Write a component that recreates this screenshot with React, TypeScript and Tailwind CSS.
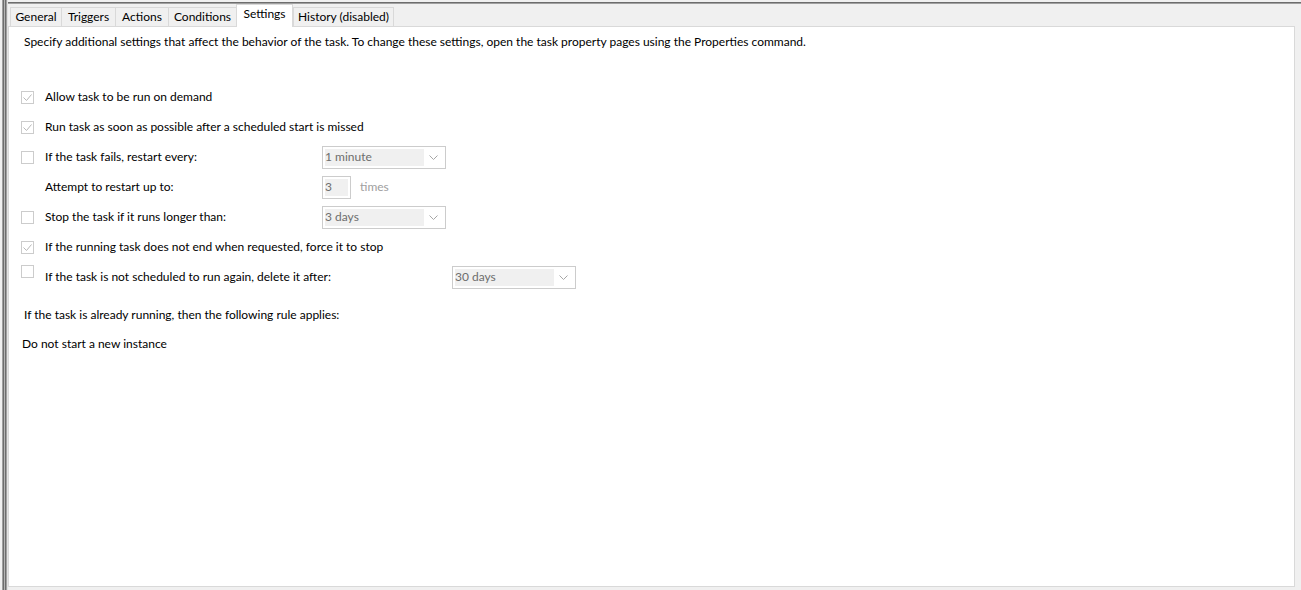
const tabs = [
  { label: 'General', w: 'w-[51px]' },
  { label: 'Triggers', w: 'w-[54px]' },
  { label: 'Actions', w: 'w-[53px]' },
  { label: 'Conditions', w: 'w-[68px]' },
  { label: 'Settings', w: 'w-[57px]', active: true },
  { label: 'History (disabled)', w: 'w-[101px]', last: true },
];

function Check({ checked }: { checked?: boolean }) {
  return (
    <div className="w-[13px] h-[13px] border border-[#cccccc] bg-white flex items-center justify-center shrink-0">
      {checked && (
        <svg width="11" height="11" viewBox="0 0 11 11">
          <polyline points="1.5,5.5 4.5,8.5 9.5,2.5" fill="none" stroke="#b8b8b8" strokeWidth="1" />
        </svg>
      )}
    </div>
  );
}

function Dropdown({ value }: { value: string }) {
  return (
    <div className="w-[124px] h-[23px] border border-[#cccccc] bg-white flex items-center p-[2px]">
      <div className="flex-1 h-full bg-[#f0f0f0] flex items-center text-[#6d6d6d]">{value}</div>
      <div className="w-[19px] h-full flex items-center justify-center">
        <svg width="9" height="5" viewBox="0 0 9 5">
          <polyline points="0.5,0.5 4.5,4.5 8.5,0.5" fill="none" stroke="#a6a6a6" strokeWidth="1" />
        </svg>
      </div>
    </div>
  );
}

export default function App() {
  return (
    <div className="flex h-[590px] w-full bg-[#f0f0f0] font-['Lato','Noto_Sans',sans-serif] text-[12px] leading-[16px] text-black">
      {/* splitter stripes */}
      <div className="flex h-full shrink-0">
        <div className="w-[2px] bg-[#f0f0f0]" />
        <div className="w-px bg-[#a0a0a0]" />
        <div className="w-px bg-[#6d6d6d]" />
        <div className="w-px bg-[#b4b4b4]" />
        <div className="w-px bg-[#6d6d6d]" />
        <div className="w-px bg-[#a0a0a0]" />
        <div className="w-px bg-[#e3e3e3]" />
      </div>

      <div className="flex-1 flex flex-col min-w-0">
        {/* top edge */}
        <div className="h-[2px] bg-[#f0f0f0]" />
        <div className="h-px bg-[#6d6d6d]" />
        <div className="h-px bg-[#a0a0a0]" />

        {/* tab strip */}
        <div className="h-[22px] flex items-end pl-[2px] relative z-10">
          {tabs.map((t) =>
            t.active ? (
              <div
                key={t.label}
                className={`${t.w} h-[23px] -mb-px bg-white border-l border-r border-t border-[#d9d9d9] flex items-center justify-center pb-[4px]`}
              >
                {t.label}
              </div>
            ) : (
              <div
                key={t.label}
                className={`${t.w} h-[19px] bg-[#f0f0f0] border-l border-t border-[#d9d9d9] flex items-center justify-center ${t.last ? 'border-r' : ''}`}
              >
                {t.label}
              </div>
            )
          )}
        </div>

        {/* panel */}
        <div className="flex-1 bg-white border border-[#d9d9d9] mr-[6px] mb-[3px] flex flex-col">
          <div className="pl-[15px] pt-[7px] h-[23px]">
            Specify additional settings that affect the behavior of the task. To change these settings, open the task property pages using the Properties command.
          </div>

          <div className="flex flex-col mt-[32px] pl-[12px]">
            <div className="h-[30px] flex items-center">
              <Check checked />
              <span className="ml-[11px]">Allow task to be run on demand</span>
            </div>
            <div className="h-[30px] flex items-center">
              <Check checked />
              <span className="ml-[11px]">Run task as soon as possible after a scheduled start is missed</span>
            </div>
            <div className="h-[30px] flex items-center">
              <Check />
              <span className="ml-[11px] w-[277px]">If the task fails, restart every:</span>
              <Dropdown value="1 minute" />
            </div>
            <div className="h-[30px] flex items-center">
              <div className="w-[13px]" />
              <span className="ml-[11px] w-[277px]">Attempt to restart up to:</span>
              <div className="w-[29px] h-[23px] border border-[#cccccc] p-[2px]">
                <div className="h-full bg-[#f0f0f0] flex items-center text-[#6d6d6d]">3</div>
              </div>
              <span className="ml-[9px] text-[#a0a0a0]">times</span>
            </div>
            <div className="h-[30px] flex items-center">
              <Check />
              <span className="ml-[11px] w-[277px]">Stop the task if it runs longer than:</span>
              <Dropdown value="3 days" />
            </div>
            <div className="h-[30px] flex items-center">
              <Check checked />
              <span className="ml-[11px]">If the running task does not end when requested, force it to stop</span>
            </div>
            <div className="h-[30px] flex items-center">
              <div className="self-start mt-[3px]">
                <Check />
              </div>
              <span className="ml-[11px] w-[407px]">If the task is not scheduled to run again, delete it after:</span>
              <Dropdown value="30 days" />
            </div>
          </div>

          <div className="pl-[15px] mt-[15px] h-[16px]">If the task is already running, then the following rule applies:</div>
          <div className="pl-[13px] mt-[13px] h-[16px]">Do not start a new instance</div>
        </div>
      </div>
    </div>
  );
}
